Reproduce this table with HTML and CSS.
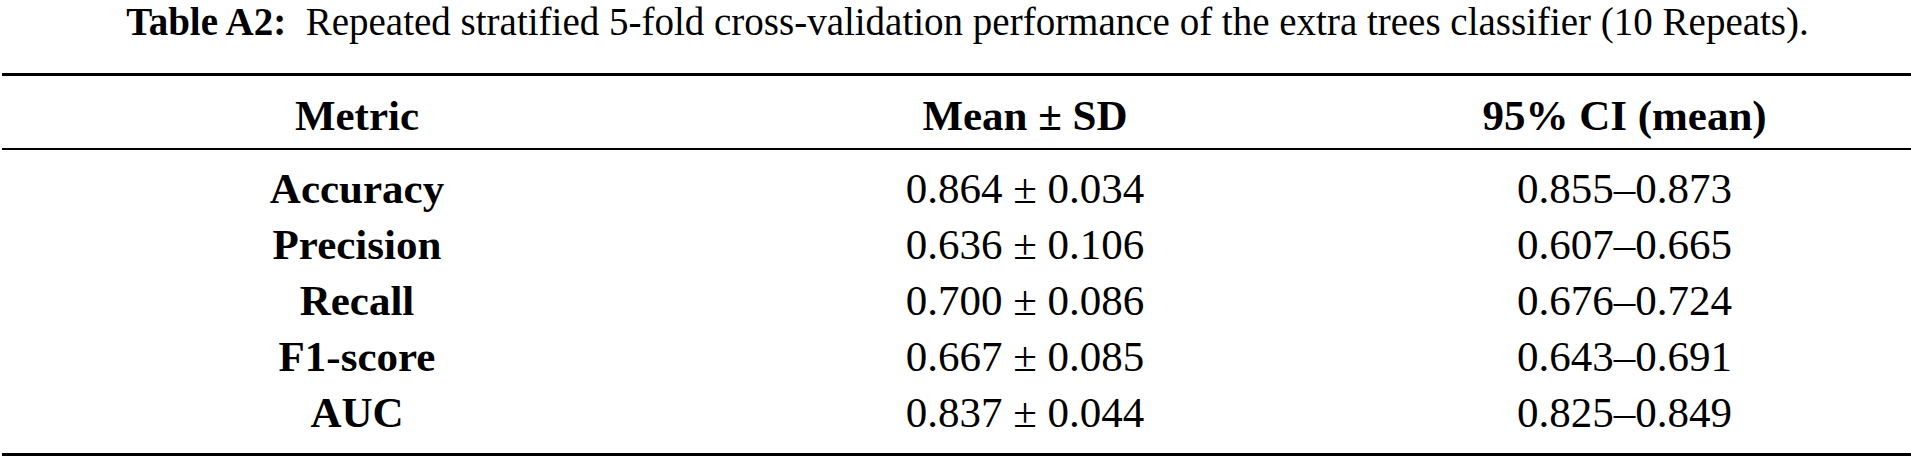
FILE: index.html
```html
<!DOCTYPE html>
<html lang="en">
<head>
<meta charset="utf-8">
<title>Table A2</title>
<link rel="stylesheet" href="styles.css">
</head>
<body>
<div class="page">
  <p class="caption"><b>Table A2:</b>&nbsp; Repeated stratified 5-fold cross-validation performance of the extra trees classifier (10 Repeats).</p>
  <div class="table">
    <div class="thead">
      <div class="cell">Metric</div>
      <div class="cell">Mean ± SD</div>
      <div class="cell">95% CI (mean)</div>
    </div>
    <div class="tbody">
      <div class="cell label">Accuracy</div><div class="cell">0.864 ± 0.034</div><div class="cell">0.855–0.873</div>
      <div class="cell label">Precision</div><div class="cell">0.636 ± 0.106</div><div class="cell">0.607–0.665</div>
      <div class="cell label">Recall</div><div class="cell">0.700 ± 0.086</div><div class="cell">0.676–0.724</div>
      <div class="cell label">F1-score</div><div class="cell">0.667 ± 0.085</div><div class="cell">0.643–0.691</div>
      <div class="cell label">AUC</div><div class="cell">0.837 ± 0.044</div><div class="cell">0.825–0.849</div>
    </div>
  </div>
</div>
</body>
</html>
```
FILE: styles.css
```css
html, body {
  margin: 0;
  padding: 0;
  background: #fff;
}
.page {
  width: 1911px;
  color: #000;
  font-family: "Liberation Serif", "Times New Roman", serif;
}
.caption {
  margin: 0;
  padding: 2px 0 0 24px;
  text-align: center;
  font-size: 39px;
  line-height: 40px;
  white-space: nowrap;
}
.caption b {
  font-weight: 700;
}
.table {
  margin: 31px 0 0 2px;
  width: 1909px;
  border-top: 3px solid #000;
  border-bottom: 3px solid #000;
}
.thead,
.tbody {
  display: grid;
  grid-template-columns: 710px 626px 1fr;
}
.thead {
  padding: 12px 0 4px;
  border-bottom: 2px solid #000;
  font-weight: 700;
}
.tbody {
  padding: 11px 0 12px;
}
.cell {
  text-align: center;
  font-size: 43px;
  line-height: 56px;
  white-space: nowrap;
}
.label {
  font-weight: 700;
}
```
